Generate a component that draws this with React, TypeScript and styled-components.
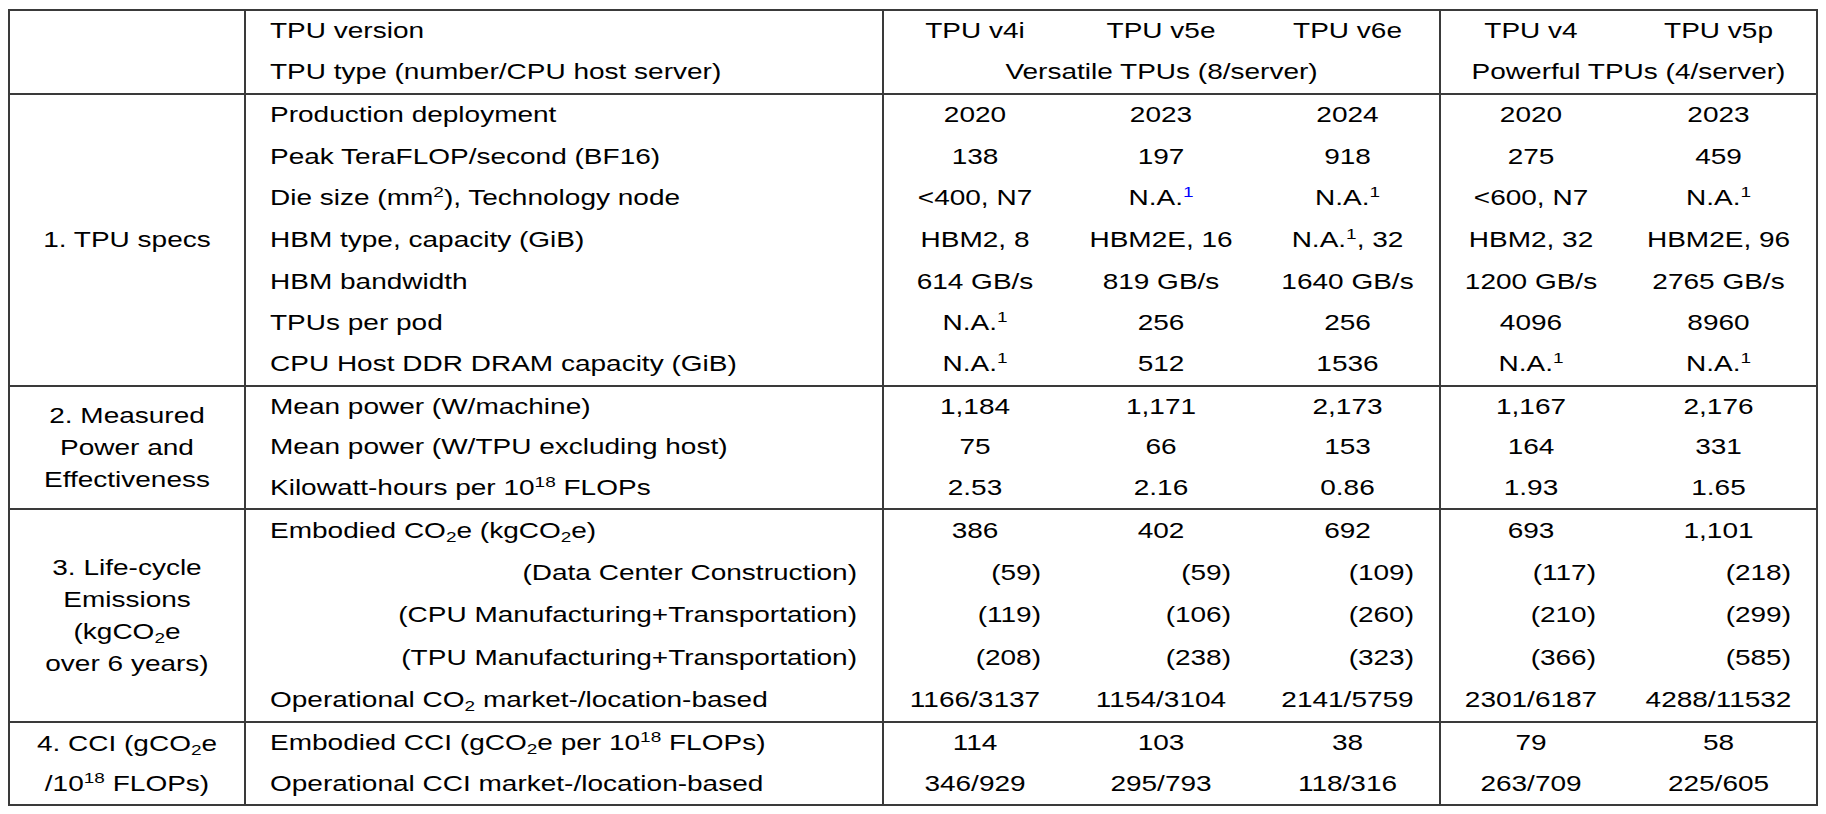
import React from "react";
import styled, { createGlobalStyle } from "styled-components";

const GlobalStyle = createGlobalStyle`
  body {
    margin: 0;
    background: #fff;
    color: #000;
    font-family: "Liberation Sans", Arial, Helvetica, sans-serif;
  }
`;

const LINE = "2px solid #3a3a3a";
// the source table is set in wide type: glyphs are ~1.27x wider than tall
const SQUASH = 0.786;

const Page = styled.div`
  padding: 9px 0 0 8px;
`;

const Table = styled.table`
  width: 1810px;
  border-collapse: collapse;
  table-layout: fixed;
  border: ${LINE};
  font-size: 28px;
  line-height: 1.15;
`;

const Col = styled.col<{ $w: number; $edge?: boolean }>`
  width: ${p => p.$w}px;
  border-right: ${p => (p.$edge ? LINE : "none")};
`;

const Section = styled.tbody`
  border-top: ${LINE};
`;

const Row = styled.tr<{ $h: number }>`
  height: ${p => p.$h}px;
`;

type Align = "left" | "center" | "right";

const Cell = styled.td<{ $align?: Align }>`
  padding: 0 ${p => (p.$align === "right" ? 25 : 0)}px 0 0;
  text-align: ${p => p.$align ?? "center"};
  vertical-align: middle;
  white-space: nowrap;
`;

const Label = styled(Cell)<{ $right?: boolean }>`
  padding: ${p => (p.$right ? "0 25px 0 0" : "0 0 0 24px")};
  text-align: ${p => (p.$right ? "right" : "left")};
`;

const Category = styled.td`
  text-align: center;
  vertical-align: middle;
  padding: 0 2px;
  white-space: nowrap;
`;

const Wide = styled.span`
  display: inline-block;
  transform: scaleY(${SQUASH});
`;

const CategoryLine = styled.div<{ $lh: number }>`
  height: ${p => p.$lh}px;
  line-height: ${p => p.$lh}px;
  transform: scaleY(${SQUASH});
`;

const Sup = styled.sup<{ $link?: boolean }>`
  font-size: 19px;
  line-height: 0;
  vertical-align: 10px;
  color: ${p => (p.$link ? "#0000ff" : "inherit")};
`;

const Sub = styled.sub`
  font-size: 19px;
  line-height: 0;
  vertical-align: -5px;
`;

const NA = ({ link }: { link?: boolean }) => (
  <>
    N.A.<Sup $link={link}>1</Sup>
  </>
);

const CO2 = () => (
  <>
    CO<Sub>2</Sub>
  </>
);

type DataRow = {
  label: React.ReactNode;
  right?: boolean;
  values: React.ReactNode[];
  h: number;
};

type Group = {
  category: React.ReactNode[];
  lh: number;
  rows: DataRow[];
};

const groups: Group[] = [
  {
    category: ["1. TPU specs"],
    lh: 32,
    rows: [
      { label: "Production deployment", h: 42, values: ["2020", "2023", "2024", "2020", "2023"] },
      { label: "Peak TeraFLOP/second (BF16)", h: 42, values: ["138", "197", "918", "275", "459"] },
      {
        label: <>Die size (mm<Sup>2</Sup>), Technology node</>,
        h: 41,
        values: ["<400, N7", <NA link />, <NA />, "<600, N7", <NA />],
      },
      {
        label: "HBM type, capacity (GiB)",
        h: 42,
        values: ["HBM2, 8", "HBM2E, 16", <><NA />, 32</>, "HBM2, 32", "HBM2E, 96"],
      },
      {
        label: "HBM bandwidth",
        h: 42,
        values: ["614 GB/s", "819 GB/s", "1640 GB/s", "1200 GB/s", "2765 GB/s"],
      },
      { label: "TPUs per pod", h: 41, values: [<NA />, "256", "256", "4096", "8960"] },
      {
        label: "CPU Host DDR DRAM capacity (GiB)",
        h: 42,
        values: [<NA />, "512", "1536", <NA />, <NA />],
      },
    ],
  },
  {
    category: ["2. Measured", "Power and", "Effectiveness"],
    lh: 32,
    rows: [
      { label: "Mean power (W/machine)", h: 41, values: ["1,184", "1,171", "2,173", "1,167", "2,176"] },
      { label: "Mean power (W/TPU excluding host)", h: 41, values: ["75", "66", "153", "164", "331"] },
      {
        label: <>Kilowatt-hours per 10<Sup>18</Sup> FLOPs</>,
        h: 41,
        values: ["2.53", "2.16", "0.86", "1.93", "1.65"],
      },
    ],
  },
  {
    category: ["3. Life-cycle", "Emissions", <>(kg<CO2 />e</>, "over 6 years)"],
    lh: 32,
    rows: [
      {
        label: <>Embodied <CO2 />e (kg<CO2 />e)</>,
        h: 43,
        values: ["386", "402", "692", "693", "1,101"],
      },
      { label: "(Data Center Construction)", right: true, h: 42, values: ["(59)", "(59)", "(109)", "(117)", "(218)"] },
      {
        label: "(CPU Manufacturing+Transportation)",
        right: true,
        h: 43,
        values: ["(119)", "(106)", "(260)", "(210)", "(299)"],
      },
      {
        label: "(TPU Manufacturing+Transportation)",
        right: true,
        h: 42,
        values: ["(208)", "(238)", "(323)", "(366)", "(585)"],
      },
      {
        label: <>Operational <CO2 /> market-/location-based</>,
        h: 43,
        values: ["1166/3137", "1154/3104", "2141/5759", "2301/6187", "4288/11532"],
      },
    ],
  },
  {
    category: [<>4. CCI (g<CO2 />e</>, <>/10<Sup>18</Sup> FLOPs)</>],
    lh: 40,
    rows: [
      {
        label: <>Embodied CCI (g<CO2 />e per 10<Sup>18</Sup> FLOPs)</>,
        h: 42,
        values: ["114", "103", "38", "79", "58"],
      },
      {
        label: "Operational CCI market-/location-based",
        h: 41,
        values: ["346/929", "295/793", "118/316", "263/709", "225/605"],
      },
    ],
  },
];

const versions = ["TPU v4i", "TPU v5e", "TPU v6e", "TPU v4", "TPU v5p"];

export default function App() {
  return (
    <>
      <GlobalStyle />
      <Page>
        <Table>
          <colgroup>
            <Col $w={236} $edge />
            <Col $w={638} $edge />
            <Col $w={183} />
            <Col $w={190} />
            <Col $w={184} $edge />
            <Col $w={181} />
            <Col $w={196} />
          </colgroup>
          <Section>
            <Row $h={42}>
              <Category rowSpan={2} />
              <Label>
                <Wide>TPU version</Wide>
              </Label>
              {versions.map(v => (
                <Cell key={v}>
                  <Wide>{v}</Wide>
                </Cell>
              ))}
            </Row>
            <Row $h={42}>
              <Label>
                <Wide>TPU type (number/CPU host server)</Wide>
              </Label>
              <Cell colSpan={3}>
                <Wide>Versatile TPUs (8/server)</Wide>
              </Cell>
              <Cell colSpan={2}>
                <Wide>Powerful TPUs (4/server)</Wide>
              </Cell>
            </Row>
          </Section>
          {groups.map((g, gi) => (
            <Section key={gi}>
              {g.rows.map((r, ri) => (
                <Row $h={r.h} key={ri}>
                  {ri === 0 && (
                    <Category rowSpan={g.rows.length}>
                      {g.category.map((line, li) => (
                        <CategoryLine $lh={g.lh} key={li}>
                          {line}
                        </CategoryLine>
                      ))}
                    </Category>
                  )}
                  <Label $right={r.right}>
                    <Wide>{r.label}</Wide>
                  </Label>
                  {r.values.map((v, vi) => (
                    <Cell key={vi} $align={r.right ? "right" : "center"}>
                      <Wide>{v}</Wide>
                    </Cell>
                  ))}
                </Row>
              ))}
            </Section>
          ))}
        </Table>
      </Page>
    </>
  );
}
